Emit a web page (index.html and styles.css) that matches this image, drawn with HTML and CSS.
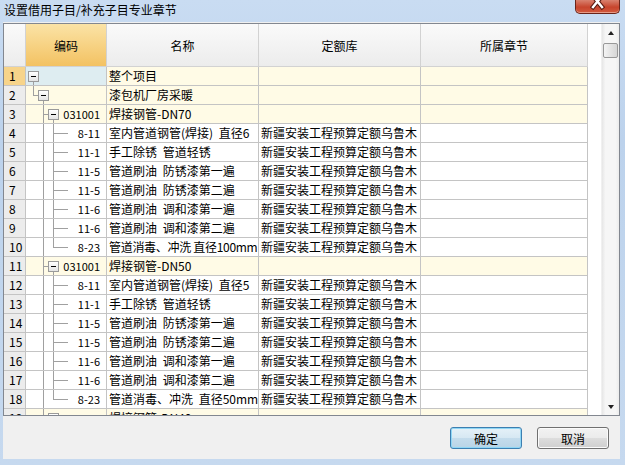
FILE: index.html
```html
<!DOCTYPE html>
<html lang="zh-CN">
<head>
  <meta charset="UTF-8">
  <title>设置借用子目/补充子目专业章节</title>
  <link rel="stylesheet" href="styles.css">
</head>
<body>
  <div class="window">
    <div class="titlebar">
      <span class="title">设置借用子目/补充子目专业章节</span>
      <div class="close-btn">
        <svg width="45" height="14" viewBox="0 0 45 14">
          <path d="M18 -4 L27 7 M27 -4 L18 7" stroke="#5a1c12" stroke-width="4.5" stroke-linecap="square"/>
          <path d="M18 -4 L27 7 M27 -4 L18 7" stroke="#fff" stroke-width="2.4" stroke-linecap="square"/>
        </svg>
      </div>
    </div>

    <div class="client">
      <div class="grid">
        <div class="grid-body">
          <table class="sheet">
            <colgroup>
              <col style="width:22px">
              <col style="width:81px">
              <col style="width:152px">
              <col style="width:162px">
              <col style="width:167px">
            </colgroup>
            <thead>
              <tr>
                <th class="num"></th>
                <th class="active">编码</th>
                <th>名称</th>
                <th>定额库</th>
                <th>所属章节</th>
              </tr>
            </thead>
            <tbody>
              <tr class="group cur">
                <td class="num">1</td>
                <td class="code sel tr-root"><div class="node"><span class="toggle lv0"></span></div></td>
                <td>整个项目</td><td></td><td></td>
              </tr>
              <tr class="group">
                <td class="num">2</td>
                <td class="code tr-l1"><div class="node"><span class="toggle lv1"></span></div></td>
                <td>漆包机厂房采暖</td><td></td><td></td>
              </tr>
              <tr class="group">
                <td class="num">3</td>
                <td class="code tr-l2"><div class="node"><span class="toggle lv2"></span><span class="cd">031001</span></div></td>
                <td>焊接钢管-DN70</td><td></td><td></td>
              </tr>
              <tr>
                <td class="num">4</td>
                <td class="code tr-leaf"><div class="node"><span class="cd">8-11</span></div></td>
                <td>室内管道钢管(焊接) 直径6</td><td>新疆安装工程预算定额乌鲁木</td><td></td>
              </tr>
              <tr>
                <td class="num">5</td>
                <td class="code tr-leaf"><div class="node"><span class="cd">11-1</span></div></td>
                <td>手工除锈 管道轻锈</td><td>新疆安装工程预算定额乌鲁木</td><td></td>
              </tr>
              <tr>
                <td class="num">6</td>
                <td class="code tr-leaf"><div class="node"><span class="cd">11-5</span></div></td>
                <td>管道刷油 防锈漆第一遍</td><td>新疆安装工程预算定额乌鲁木</td><td></td>
              </tr>
              <tr>
                <td class="num">7</td>
                <td class="code tr-leaf"><div class="node"><span class="cd">11-5</span></div></td>
                <td>管道刷油 防锈漆第二遍</td><td>新疆安装工程预算定额乌鲁木</td><td></td>
              </tr>
              <tr>
                <td class="num">8</td>
                <td class="code tr-leaf"><div class="node"><span class="cd">11-6</span></div></td>
                <td>管道刷油 调和漆第一遍</td><td>新疆安装工程预算定额乌鲁木</td><td></td>
              </tr>
              <tr>
                <td class="num">9</td>
                <td class="code tr-leaf"><div class="node"><span class="cd">11-6</span></div></td>
                <td>管道刷油 调和漆第二遍</td><td>新疆安装工程预算定额乌鲁木</td><td></td>
              </tr>
              <tr>
                <td class="num">10</td>
                <td class="code tr-last"><div class="node"><span class="cd">8-23</span></div></td>
                <td class="fit">管道消毒、冲洗 直径100mm</td><td>新疆安装工程预算定额乌鲁木</td><td></td>
              </tr>
              <tr class="group">
                <td class="num">11</td>
                <td class="code tr-l2"><div class="node"><span class="toggle lv2"></span><span class="cd">031001</span></div></td>
                <td>焊接钢管-DN50</td><td></td><td></td>
              </tr>
              <tr>
                <td class="num">12</td>
                <td class="code tr-leaf"><div class="node"><span class="cd">8-11</span></div></td>
                <td>室内管道钢管(焊接) 直径5</td><td>新疆安装工程预算定额乌鲁木</td><td></td>
              </tr>
              <tr>
                <td class="num">13</td>
                <td class="code tr-leaf"><div class="node"><span class="cd">11-1</span></div></td>
                <td>手工除锈 管道轻锈</td><td>新疆安装工程预算定额乌鲁木</td><td></td>
              </tr>
              <tr>
                <td class="num">14</td>
                <td class="code tr-leaf"><div class="node"><span class="cd">11-5</span></div></td>
                <td>管道刷油 防锈漆第一遍</td><td>新疆安装工程预算定额乌鲁木</td><td></td>
              </tr>
              <tr>
                <td class="num">15</td>
                <td class="code tr-leaf"><div class="node"><span class="cd">11-5</span></div></td>
                <td>管道刷油 防锈漆第二遍</td><td>新疆安装工程预算定额乌鲁木</td><td></td>
              </tr>
              <tr>
                <td class="num">16</td>
                <td class="code tr-leaf"><div class="node"><span class="cd">11-6</span></div></td>
                <td>管道刷油 调和漆第一遍</td><td>新疆安装工程预算定额乌鲁木</td><td></td>
              </tr>
              <tr>
                <td class="num">17</td>
                <td class="code tr-leaf"><div class="node"><span class="cd">11-6</span></div></td>
                <td>管道刷油 调和漆第二遍</td><td>新疆安装工程预算定额乌鲁木</td><td></td>
              </tr>
              <tr>
                <td class="num">18</td>
                <td class="code tr-last"><div class="node"><span class="cd">8-23</span></div></td>
                <td>管道消毒、冲洗 直径50mm</td><td>新疆安装工程预算定额乌鲁木</td><td></td>
              </tr>
              <tr class="group">
                <td class="num">19</td>
                <td class="code tr-l2"><div class="node"><span class="toggle lv2"></span><span class="cd">031001</span></div></td>
                <td>焊接钢管-DN40</td><td></td><td></td>
              </tr>
            </tbody>
          </table>
        </div>
        <div class="vscroll">
          <div class="sb-btn"><span class="arrow-up"></span></div>
          <div class="sb-track"><div class="sb-thumb"></div></div>
          <div class="sb-btn"><span class="arrow-down"></span></div>
        </div>
      </div>

      <div class="buttons">
        <button class="btn default">确定</button>
        <button class="btn">取消</button>
      </div>
    </div>
  </div>
</body>
</html>
```

FILE: styles.css
```css
* {
  box-sizing: border-box;
}

body {
  margin: 0;
  font-family: "Noto Sans CJK SC", "Noto Sans", sans-serif;
  font-size: 12px;
  color: #000;
}

/* window frame */
.window {
  width: 625px;
  height: 465px;
  display: flex;
  flex-direction: column;
  overflow: hidden;
  background: linear-gradient(#c9dcf2, #bcd2ec 30%, #c6d9ef);
}

.titlebar {
  height: 22px;
  flex: none;
  display: flex;
  align-items: flex-start;
  padding-left: 4px;
}

.title {
  line-height: 20px;
}

.close-btn {
  margin-left: auto;
  margin-right: 5px;
  width: 45px;
  height: 14px;
  border: 1px solid #6a2419;
  border-top: none;
  border-radius: 0 0 5px 5px;
  background: linear-gradient(#d9826f, #c7452d 55%, #d25a3f);
  box-shadow: inset 0 -1px 0 #e79a86;
  overflow: hidden;
}

.close-btn svg {
  display: block;
  margin-left: -1px;
}

.client {
  margin: 0 5px 0 3px;
  height: 437px;
  flex: none;
  background: #f0f0f0;
  display: flex;
  flex-direction: column;
}

/* grid */
.grid {
  margin-top: 1px;
  height: 393px;
  border: 1px solid #828790;
  display: flex;
  background: #fff;
}

.grid-body {
  flex: 1;
  overflow: hidden;
}

.sheet {
  table-layout: fixed;
  width: 584px;
  border-collapse: separate;
  border-spacing: 0;
}

.sheet th,
.sheet td {
  box-sizing: content-box;
  border-right: 1px solid #c4c4c4;
  border-bottom: 1px solid #c4c4c4;
  padding: 0 0 0 2px;
  white-space: nowrap;
  overflow: hidden;
  font-weight: normal;
  word-spacing: 3px;
}

.sheet th {
  height: 42px;
  text-align: center;
  background: linear-gradient(#fafafa, #ececec);
  border-color: #d2d2d2;
  padding: 0;
}

.sheet th.active {
  background: linear-gradient(#fbe3a6, #f3c262);
}

.sheet td {
  height: 18px;
  line-height: 18px;
}

.sheet td.fit {
  word-spacing: 0;
  letter-spacing: -0.3px;
}

.sheet tr.group td {
  background-color: #fffbe6;
}

.sheet tr td.num {
  background: #ececec;
  padding-left: 5px;
}

.sheet tr.cur td.num {
  background: #f7d48a;
}

.sheet tr td.sel {
  background-color: #deedf1;
}

/* tree column */
.sheet td.code {
  padding: 0;
  background-repeat: no-repeat;
}

.node {
  height: 18px;
  display: flex;
  align-items: center;
}

.cd {
  margin-left: auto;
  padding-right: 6px;
  font-size: 11px;
}

.toggle {
  width: 11px;
  height: 11px;
  flex: none;
  border: 1px solid #9a9a9a;
  background: linear-gradient(#ffffff, #e4e4e4);
  display: flex;
  align-items: center;
  justify-content: center;
}

.toggle::after {
  content: "";
  width: 5px;
  height: 1px;
  background: #000;
}

.lv0 { margin-left: 2px; }
.lv1 { margin-left: 12px; }
.lv2 { margin-left: 22px; }

.tr-root {
  background-image: linear-gradient(#a0a0a0, #a0a0a0);
  background-position: 7px 9px;
  background-size: 1px 9px;
}

.tr-l1 {
  background-image: linear-gradient(#a0a0a0, #a0a0a0), linear-gradient(#a0a0a0, #a0a0a0), linear-gradient(#a0a0a0, #a0a0a0);
  background-position: 7px 0, 7px 9px, 17px 9px;
  background-size: 1px 9px, 5px 1px, 1px 9px;
}

.tr-l2 {
  background-image: linear-gradient(#a0a0a0, #a0a0a0), linear-gradient(#a0a0a0, #a0a0a0), linear-gradient(#a0a0a0, #a0a0a0);
  background-position: 17px 0, 17px 9px, 27px 9px;
  background-size: 1px 18px, 5px 1px, 1px 9px;
}

.tr-leaf {
  background-image: linear-gradient(#a0a0a0, #a0a0a0), linear-gradient(#a0a0a0, #a0a0a0), linear-gradient(#a0a0a0, #a0a0a0);
  background-position: 17px 0, 27px 0, 27px 9px;
  background-size: 1px 18px, 1px 18px, 15px 1px;
}

.tr-last {
  background-image: linear-gradient(#a0a0a0, #a0a0a0), linear-gradient(#a0a0a0, #a0a0a0), linear-gradient(#a0a0a0, #a0a0a0);
  background-position: 17px 0, 27px 0, 27px 9px;
  background-size: 1px 18px, 1px 10px, 15px 1px;
}

/* scrollbar */
.vscroll {
  width: 18px;
  flex: none;
  display: flex;
  flex-direction: column;
  background: linear-gradient(to right, #e6e6e6, #f6f6f6 20%, #f6f6f6 80%, #ececec);
  border-left: 1px solid #f0f0f0;
}

.sb-btn {
  height: 17px;
  display: flex;
  align-items: center;
  justify-content: center;
}

.arrow-up {
  border-left: 3px solid transparent;
  border-right: 3px solid transparent;
  border-bottom: 4px solid #222;
}

.arrow-down {
  border-left: 3px solid transparent;
  border-right: 3px solid transparent;
  border-top: 4px solid #222;
}

.sb-track {
  flex: 1;
  padding: 2px 0 0 1px;
}

.sb-thumb {
  width: 15px;
  height: 15px;
  border: 1px solid #989898;
  border-radius: 2px;
  background: linear-gradient(to right, #f4f4f4, #e4e4e4 50%, #d6d6d6);
}

/* dialog buttons */
.buttons {
  display: flex;
  justify-content: flex-end;
  gap: 15px;
  padding: 11px 11px 0 0;
}

.btn {
  width: 72px;
  height: 22px;
  padding: 0;
  font-family: inherit;
  font-size: 12px;
  color: #000;
  border: 1px solid #707070;
  border-radius: 3px;
  background: linear-gradient(#f2f2f2, #ebebeb 50%, #dddddd 50%, #cfcfcf);
  box-shadow: inset 0 0 0 1px #fbfbfb;
}

.btn.default {
  border-color: #3c7fb1;
  background: linear-gradient(#e5f1f8, #d6e8f3 50%, #c4dcec 50%, #b9d4e6);
  box-shadow: inset 0 0 0 1px #8fd6f5;
}
```
